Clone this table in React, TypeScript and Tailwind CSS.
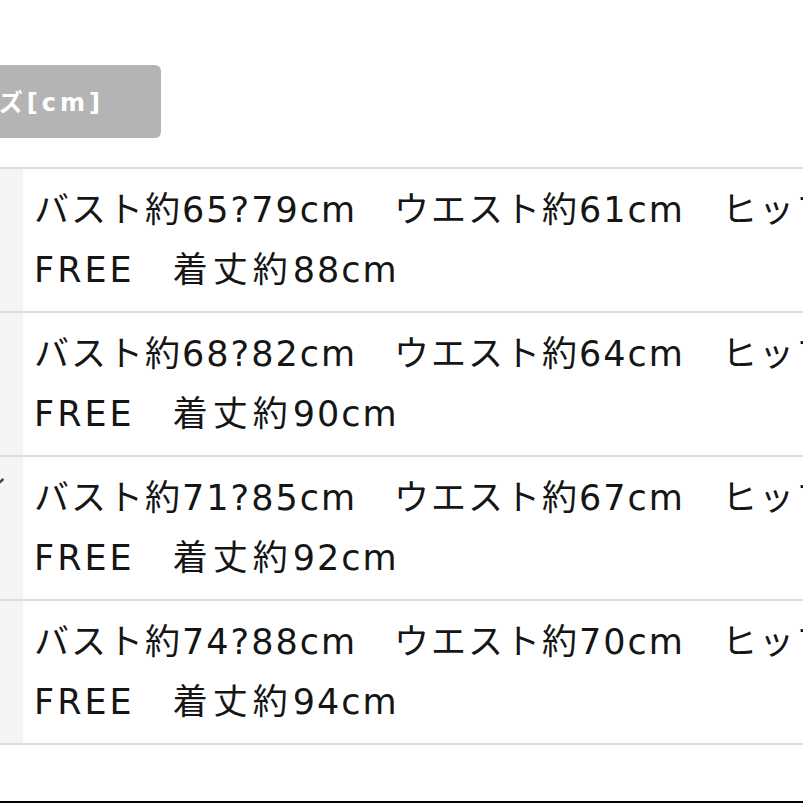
import React from "react";

const rows = [
  { bust: "65?79", waist: "61", len: "88", tail: "" },
  { bust: "68?82", waist: "64", len: "90", tail: "" },
  { bust: "71?85", waist: "67", len: "92", tail: "イ" },
  { bust: "74?88", waist: "70", len: "94", tail: "" },
];

const font = {
  fontFamily: '"DejaVu Sans", "Noto Sans CJK JP", sans-serif',
};

export default function App() {
  return (
    <div
      className="relative w-[803px] h-[803px] overflow-hidden bg-white text-[#151515]"
      style={font}
    >
      <div className="pt-[65px]">
        <div className="-ml-[10px] w-[171px] h-[73px] rounded-[6px] bg-[#b4b4b4] flex items-center justify-end pr-[57px] overflow-hidden">
          <span className="whitespace-nowrap text-white font-bold text-[24px] tracking-[4px] mt-[2px]">
            サイズ[cm]
          </span>
        </div>
      </div>

      <div className="mt-[29px] w-[1000px]">
        {rows.map((r, i) => (
          <div
            key={i}
            className={`flex border-t-2 border-[#dcdcdc] ${
              i === rows.length - 1 ? "border-b-2" : ""
            }`}
          >
            <div className="w-[23px] bg-[#f4f4f4] flex justify-start items-start overflow-hidden">
              <span className="whitespace-nowrap -ml-[20px] mt-[20px] text-[28px] leading-none text-[#444]">
                {r.tail}
              </span>
            </div>
            <div className="flex-1 pl-[11px] pt-[11px] pb-[11px] text-[35px] leading-[60px] tracking-[2px] whitespace-nowrap">
              <div>
                バスト約{r.bust}cm　ウエスト約{r.waist}cm　ヒップ約
              </div>
              <div>
                <span className="tracking-[3px]">FREE　</span>
                <span className="tracking-[5px]">着丈約</span>
                {r.len}cm
              </div>
            </div>
          </div>
        ))}
      </div>

      <div className="absolute left-0 top-[801px] w-full h-[2px] bg-black" />
    </div>
  );
}
